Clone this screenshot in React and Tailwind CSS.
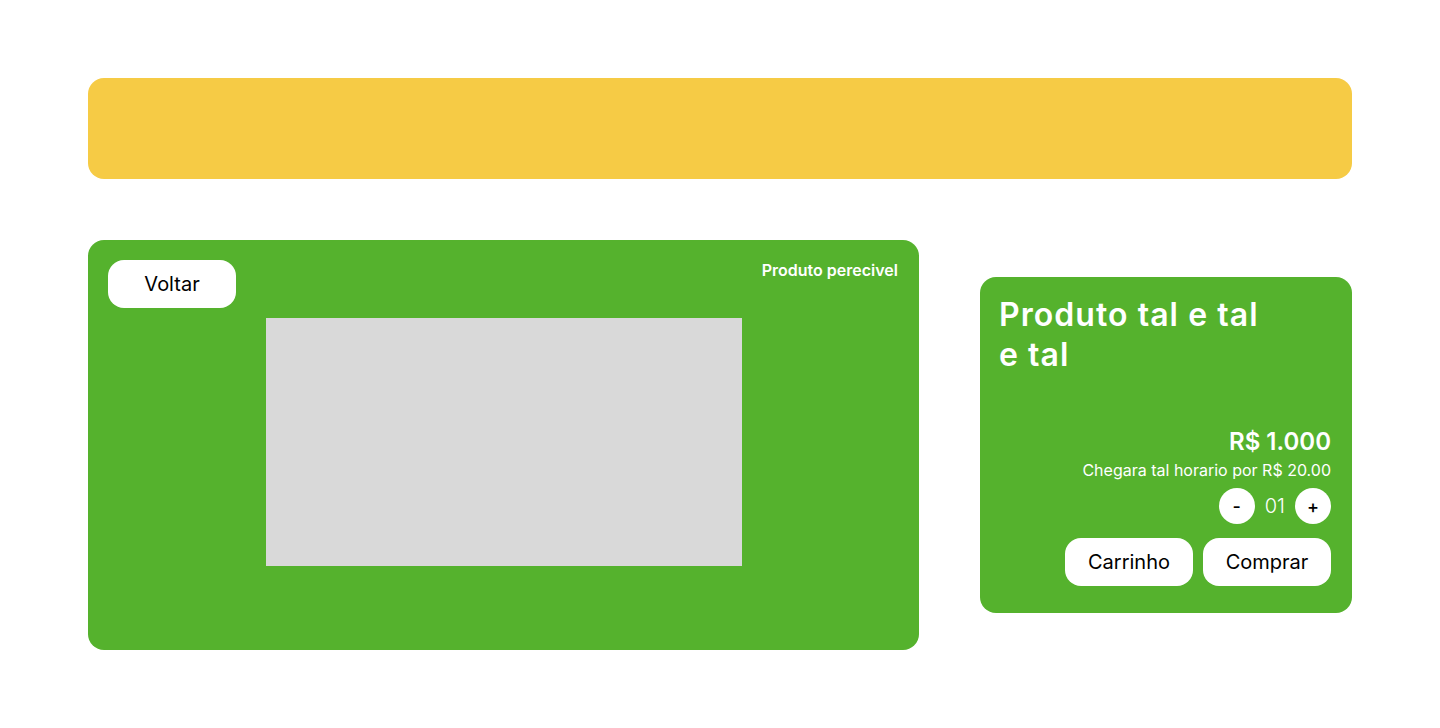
import React from "react";

export default function App() {
  return (
    <div className="min-h-[728px] w-full bg-white pt-[78px] px-[88px]" style={{ fontFamily: "Inter, 'Noto Sans', sans-serif" }}>
      <div className="h-[101px] w-full rounded-2xl bg-[#F6CB45]" />
      <div className="mt-[61px] flex items-center gap-[61px]">
        <div className="relative h-[410px] w-[831px] rounded-2xl bg-[#55B22D] p-5">
          <div className="flex items-start justify-between">
            <button className="h-12 w-32 rounded-2xl bg-white text-[20px] text-black">Voltar</button>
            <span className="mr-px text-[16px] font-semibold leading-5 text-white">Produto perecivel</span>
          </div>
          <div className="mt-2.5 flex justify-center">
            <div className="h-[248px] w-[476px] bg-[#D9D9D9]" />
          </div>
        </div>
        <div className="flex h-[336px] w-[372px] flex-col rounded-2xl bg-[#55B22D] pl-[19px] pr-[21px] pt-[18px]">
          <h1 className="w-[274px] text-[32px] font-semibold leading-10 tracking-[0.033em] text-white">Produto tal e tal e tal</h1>
          <div className="mt-[51px] flex flex-col items-end text-white">
            <span className="text-[24px] font-semibold leading-8">R$ 1.000</span>
            <span className="text-[16px] leading-6">Chegara tal horario por R$ 20.00</span>
            <div className="mt-[6px] flex items-center gap-2.5">
              <button className="h-9 w-9 rounded-full bg-white text-[18px] font-medium text-black">-</button>
              <span className="text-[20px] font-light leading-9 text-white">01</span>
              <button className="h-9 w-9 rounded-full bg-white text-[18px] font-medium text-black">+</button>
            </div>
            <div className="mt-3.5 flex gap-2.5">
              <button className="h-12 w-32 rounded-2xl bg-white text-[20px] text-black">Carrinho</button>
              <button className="h-12 w-32 rounded-2xl bg-white text-[20px] text-black">Comprar</button>
            </div>
          </div>
        </div>
      </div>
    </div>
  );
}
